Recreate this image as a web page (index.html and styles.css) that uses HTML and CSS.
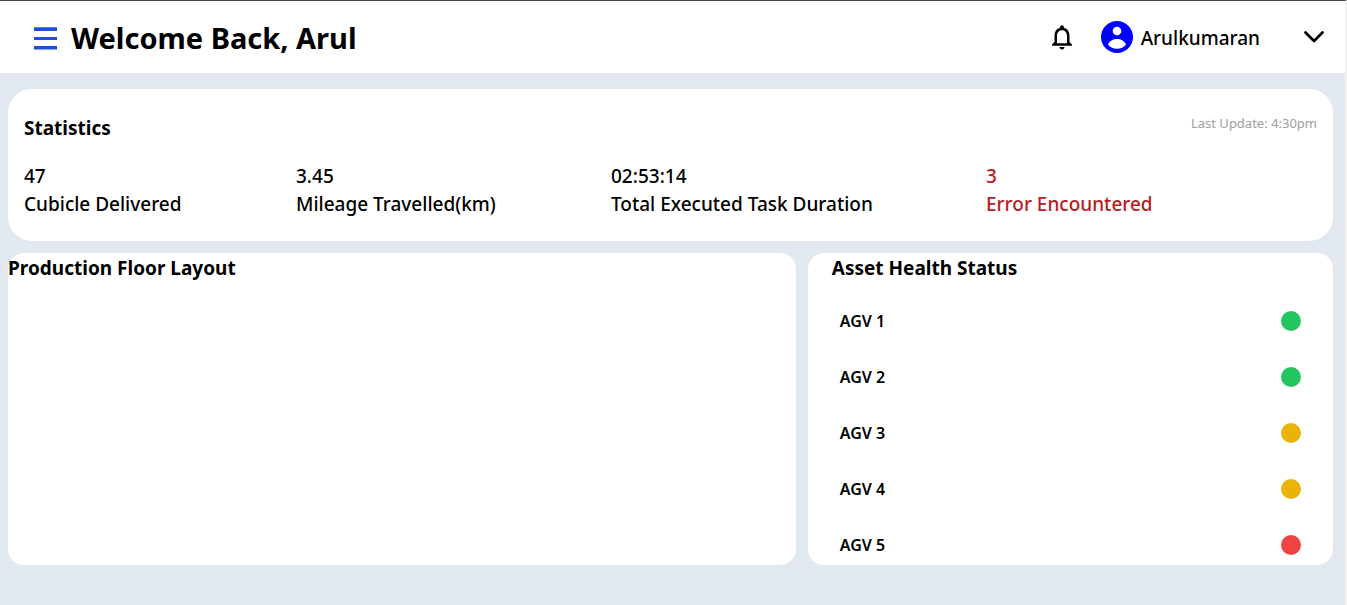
FILE: index.html
```html
<!DOCTYPE html>
<html lang="en">
<head>
<meta charset="utf-8">
<title>Dashboard</title>
<link rel="stylesheet" href="styles.css">
</head>
<body>
<header class="topbar">
  <button class="icon-btn menu-btn" type="button" aria-label="Menu">
    <svg width="24" height="26" viewBox="0 0 24 26" fill="#1d4ed8"><path d="M0 3.300h23v3.700H0zM0 13h23v3H0zM0 22h23v3.500H0z"/></svg>
  </button>
  <h1 class="welcome">Welcome Back, Arul</h1>
  <button class="icon-btn bell-btn" type="button" aria-label="Notifications">
    <svg width="30" height="30" viewBox="0 0 24 24"><path d="M12 22c1.1 0 2-.9 2-2h-4c0 1.100.9 2 2 2zm6-6v-5c0-3.070-1.630-5.640-4.500-6.320V4c0-.83-.67-1.500-1.500-1.500s-1.500.67-1.500 1.500v.68C7.640 5.360 6 7.920 6 11v5l-2 2v1h16v-1l-2-2zm-2 1H8v-6c0-2.480 1.510-4.500 4-4.500s4 2.020 4 4.500v6z"/></svg>
  </button>
  <button class="account" type="button">
    <svg width="32" height="32" viewBox="0 0 32 32"><circle cx="16" cy="16" r="16" fill="#00f"/><circle cx="16" cy="10" r="4.300" fill="#fff"/><path d="M7 23.500C8.500 20 12 18 16 18s7.500 2 9 5.500C23.500 26 20 27.700 16 27.700S8.500 26 7 23.500z" fill="#fff"/></svg>
    <span class="account-name">Arulkumaran</span>
    <svg width="22" height="14" viewBox="0 0 22 14" fill="none" stroke="#000" stroke-width="2.800" stroke-linecap="round" stroke-linejoin="round"><path d="M2.500 2.500 11 11l8.500-8.500"/></svg>
  </button>
</header>
<main class="page">
  <section class="card stats">
    <div class="stats-head">
      <h2 class="title">Statistics</h2>
      <span class="updated">Last Update: 4:30pm</span>
    </div>
    <dl class="stats-grid">
      <div class="stat"><dd>47</dd><dt>Cubicle Delivered</dt></div>
      <div class="stat"><dd>3.45</dd><dt>Mileage Travelled(km)</dt></div>
      <div class="stat"><dd>02:53:14</dd><dt>Total Executed Task Duration</dt></div>
      <div class="stat stat-error"><dd>3</dd><dt>Error Encountered</dt></div>
    </dl>
  </section>
  <div class="panels">
    <section class="card panel">
      <h2 class="title">Production Floor Layout</h2>
    </section>
    <section class="card panel health">
      <h2 class="title">Asset Health Status</h2>
      <ul class="assets">
        <li class="asset">AGV 1<span class="dot dot-ok"></span></li>
        <li class="asset">AGV 2<span class="dot dot-ok"></span></li>
        <li class="asset">AGV 3<span class="dot dot-warn"></span></li>
        <li class="asset">AGV 4<span class="dot dot-warn"></span></li>
        <li class="asset">AGV 5<span class="dot dot-bad"></span></li>
      </ul>
    </section>
  </div>
</main>
</body>
</html>
```
FILE: styles.css
```css
* { box-sizing: border-box; }
body, h1, h2, dl, dd, dt, ul { margin: 0; padding: 0; }
body {
  min-height: 100vh;
  background: #e2e8f0;
  border-top: 1px solid #444;
  border-right: 2px solid #f1f1f1;
  color: #000;
  font-family: "Segoe UI", "Noto Sans", sans-serif;
}
button { border: 0; padding: 0; background: none; font: inherit; color: inherit; cursor: pointer; }
svg { display: block; }
.topbar {
  display: flex;
  align-items: center;
  height: 72px;
  padding: 0 20px 0 34px;
  background: #fff;
}
.welcome { margin-left: 13px; padding-top: 2px; font-size: 29px; line-height: 36px; font-weight: 700; }
.bell-btn { margin-left: auto; }
.account { display: flex; align-items: center; margin-left: 24px; font-size: 19px; line-height: 28px; font-weight: 500; }
.account-name { margin: 0 43px 0 8px; padding-top: 2px; }
.page { padding: 16px 12px 40px 8px; }
.card { background: #fff; }
.title { font-size: 19px; line-height: 28px; font-weight: 700; }
.stats { padding: 25px 16px 23px; border-radius: 24px; }
.stats-head { display: flex; justify-content: space-between; }
.updated { color: #9e9e9e; font-size: 13px; line-height: 18px; }
.stats-grid {
  display: grid;
  grid-template-columns: 272fr 315fr 375fr 331fr;
  margin-top: 20px;
  font-size: 19px;
  line-height: 28px;
  font-weight: 500;
}
.stat { display: flex; flex-direction: column; }
.stat-error { color: #b91c1c; }
.panels { display: grid; grid-template-columns: 3fr 2fr; gap: 12px; margin-top: 12px; }
.panel { padding-top: 1px; border-radius: 16px; }
.health { padding-left: 24px; padding-right: 24px; }
.assets { display: grid; gap: 36px; list-style: none; padding: 29px 8px 10px; }
.asset { display: flex; align-items: center; justify-content: space-between; font-size: 16px; line-height: 20px; font-weight: 600; }
.dot { width: 20px; height: 20px; border-radius: 50%; }
.dot-ok { background: #22c55e; }
.dot-warn { background: #eab308; }
.dot-bad { background: #ef4444; }
```
